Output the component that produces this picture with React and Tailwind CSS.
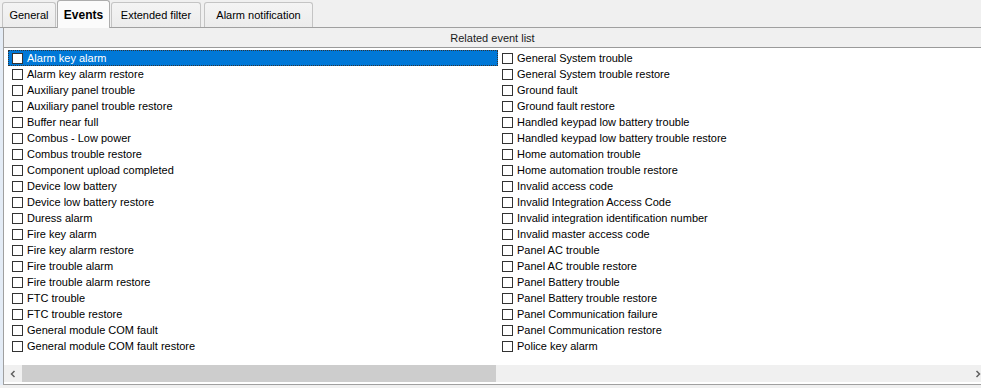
import React from "react";

const left = [
  "Alarm key alarm",
  "Alarm key alarm restore",
  "Auxiliary panel trouble",
  "Auxiliary panel trouble restore",
  "Buffer near full",
  "Combus - Low power",
  "Combus trouble restore",
  "Component upload completed",
  "Device low battery",
  "Device low battery restore",
  "Duress alarm",
  "Fire key alarm",
  "Fire key alarm restore",
  "Fire trouble alarm",
  "Fire trouble alarm restore",
  "FTC trouble",
  "FTC trouble restore",
  "General module COM fault",
  "General module COM fault restore",
];

const right = [
  "General System trouble",
  "General System trouble restore",
  "Ground fault",
  "Ground fault restore",
  "Handled keypad low battery trouble",
  "Handled keypad low battery trouble restore",
  "Home automation trouble",
  "Home automation trouble restore",
  "Invalid access code",
  "Invalid Integration Access Code",
  "Invalid integration identification number",
  "Invalid master access code",
  "Panel AC trouble",
  "Panel AC trouble restore",
  "Panel Battery trouble",
  "Panel Battery trouble restore",
  "Panel Communication failure",
  "Panel Communication restore",
  "Police key alarm",
];

function Row({ label, selected }) {
  return (
    <div
      className={
        "flex items-center h-[16px] pl-[4px] " +
        (selected
          ? "bg-[#0078d7] text-white outline-1 outline-dotted outline-offset-[-1px] outline-[#333]"
          : "text-[#000]")
      }
    >
      <span className="w-[11px] h-[11px] border border-[#333] bg-white shrink-0" />
      <span className="ml-[4px] whitespace-nowrap">{label}</span>
    </div>
  );
}

function Tab({ label, active, w }) {
  if (active) {
    return (
      <div
        className={`${w} h-[28px] -mb-[1px] border border-b-0 border-[#adadad] rounded-t-[3px] bg-[#fbfbfb] flex items-center justify-center font-bold text-[12px] z-10`}
      >
        {label}
      </div>
    );
  }
  return (
    <div
      className={`${w} h-[25px] mt-[2px] border border-b-0 border-[#c4c4c4] rounded-t-[3px] bg-gradient-to-b from-[#f4f4f4] to-[#ececec] flex items-center justify-center`}
    >
      {label}
    </div>
  );
}

export default function App() {
  return (
    <div
      className="w-[981px] h-[388px] bg-[#f0f0f0] text-[11px] overflow-hidden flex flex-col"
      style={{ fontFamily: '"Liberation Sans", Arial, sans-serif' }}
    >
      {/* tab strip */}
      <div className="flex items-end pl-[2px] h-[28px] border-b border-[#a0a0a0] gap-[1px] shrink-0">
        <Tab label="General" w="w-[54px]" />
        <Tab label="Events" w="w-[53px]" active />
        <Tab label="Extended filter" w="w-[90px]" />
        <div className="w-[1px]" />
        <Tab label="Alarm notification" w="w-[109px]" />
      </div>

      <div className="flex flex-1 min-h-0">
        <div className="w-[3px] shrink-0 bg-[#e4ecf6]" />
        <div className="flex-1 min-w-0 flex flex-col border-l border-[#a0a0a0] border-b border-b-[#a0a0a0]">
          {/* header */}
          <div className="h-[20px] shrink-0 bg-[#f0f0f0] border-b border-[#9a9a9a] flex items-center justify-center text-[#1a1a1a] pt-[1px]">
            Related event list
          </div>

          {/* list */}
          <div className="flex-1 bg-white flex flex-col min-h-0">
            <div className="flex-1 flex pt-[2px] pl-[4px] overflow-hidden">
              <div className="w-[490px] shrink-0">
                {left.map((l, i) => (
                  <Row key={l} label={l} selected={i === 0} />
                ))}
              </div>
              <div className="w-[480px] shrink-0">
                {right.map((l) => (
                  <Row key={l} label={l} />
                ))}
              </div>
            </div>

            {/* horizontal scrollbar */}
            <div className="h-[17px] shrink-0 flex bg-[#f0f0f0] mb-[2px]">
              <div className="w-[18px] shrink-0 flex items-center justify-center">
                <svg width="8" height="8" viewBox="0 0 8 8">
                  <path d="M5.5 1 L2.5 4 L5.5 7" stroke="#606060" strokeWidth="1.5" fill="none" />
                </svg>
              </div>
              <div className="w-[474px] shrink-0 bg-[#cdcdcd]" />
              <div className="flex-1" />
              <div className="w-[6px] shrink-0 flex items-center justify-start overflow-hidden">
                <svg width="8" height="8" viewBox="0 0 8 8" className="shrink-0">
                  <path d="M1.5 1 L4.5 4 L1.5 7" stroke="#606060" strokeWidth="1.5" fill="none" />
                </svg>
              </div>
            </div>
          </div>
        </div>
      </div>
      <div className="h-[3px] shrink-0 bg-[#f0f0f0]" />
    </div>
  );
}
